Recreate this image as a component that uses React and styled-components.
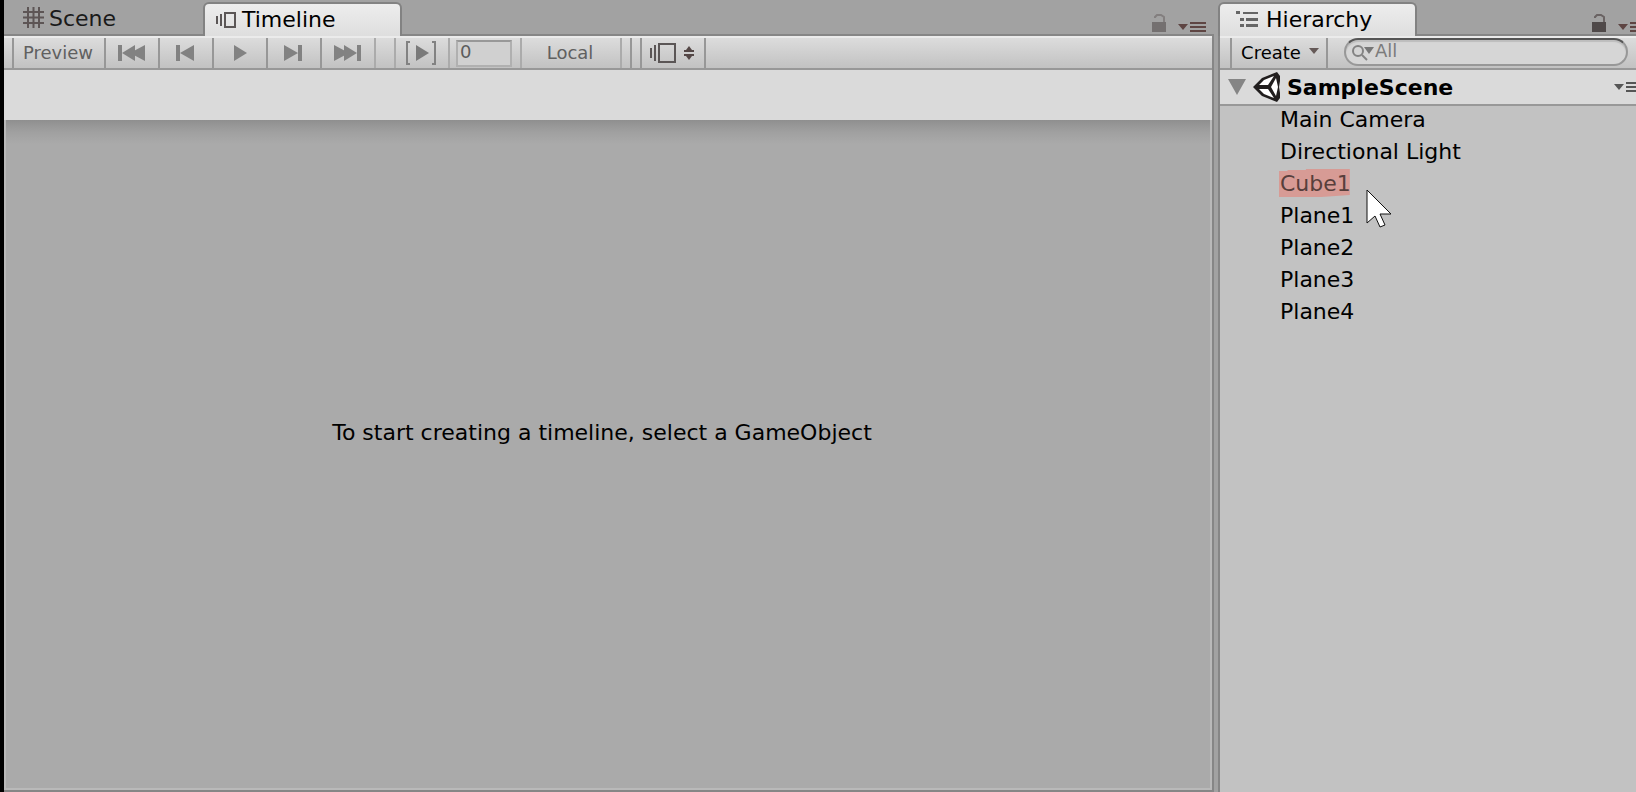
import React from "react";
import styled, { createGlobalStyle, css } from "styled-components";

const GlobalStyle = createGlobalStyle`
  * { box-sizing: border-box; }
  body {
    margin: 0;
    overflow: hidden;
    background: #a2a2a2;
    font-family: "DejaVu Sans", Verdana, sans-serif;
    font-size: 22px;
    color: #000;
  }
  button, input { font: inherit; color: inherit; margin: 0; padding: 0; border: 0; border-radius: 0; background: none; }
  svg { display: block; flex: none; }
`;

const Editor = styled.main`
  display: flex;
  height: 100vh;
  overflow: hidden;
  border-left: 4px solid #000;
`;

const Pane = styled.section`
  display: flex;
  flex-direction: column;
  min-width: 0;
  ${(p) => (p.$main
    ? css`flex: 1;`
    : css`flex: 0 0 418px; margin-left: 4px;`)}
`;

const PaneHeader = styled.header`
  display: flex;
  align-items: flex-end;
  height: 36px;
  flex: none;
  border-bottom: 2px solid #868686;
`;

const TabList = styled.div`
  display: flex;
  flex: 1;
  align-items: flex-end;
`;

const Tab = styled.button`
  display: flex;
  align-items: center;
  height: 34px;
  gap: 5px;
  padding: 4px 0 0 19px;
  line-height: 30px;
  color: #1a1a1a;
  width: ${(p) => p.$width}px;
  ${(p) => p.$active && css`
    margin-bottom: -2px;
    padding-top: 0;
    padding-left: ${p.$inset}px;
    gap: ${p.$gap}px;
    color: #000;
    background: linear-gradient(#ededed, #dedede);
    border: 2px solid #828282;
    border-bottom: 0;
    border-radius: 6px 6px 0 0;
  `}
`;

const HeaderTools = styled.div`
  display: flex;
  align-items: flex-end;
  gap: 12px;
  height: 34px;
  padding-bottom: 2px;
  margin-right: ${(p) => p.$edge}px;
`;

const IconButton = styled.button`
  display: flex;
  opacity: ${(p) => (p.$dim ? 0.55 : 1)};
`;

const PaneFrame = styled.div`
  display: flex;
  flex: 1;
  flex-direction: column;
  min-height: 0;
  ${(p) => (p.$main
    ? css`border-right: 2px solid #868686; border-bottom: 2px solid #868686;`
    : css`border-left: 2px solid #868686; background: #c2c2c2;`)}
`;

const Toolbar = styled.div`
  display: flex;
  flex: none;
  height: 34px;
  padding-left: ${(p) => p.$inset}px;
  border-top: 2px solid #ebebeb;
  border-bottom: 2px solid #989898;
  background: linear-gradient(#dcdcdc, #c2c2c2);
  font-size: 18px;
`;

const ToolButton = styled.button`
  display: flex;
  align-items: center;
  justify-content: center;
  gap: 8px;
  width: ${(p) => p.$width}px;
  height: 30px;
  padding-right: 2px;
  line-height: 30px;
  border-left: 2px solid ${(p) => (p.$faint ? "#ababab" : "#979797")};
  color: ${(p) => (p.$enabled ? "#000" : "#606060")};
`;

const CreateButton = styled(ToolButton)`
  padding: 0 0 0 2px;
`;

const Spacer = styled.span`
  width: ${(p) => p.$width}px;
  border-left: 2px solid ${(p) => (p.$faint ? "#ababab" : "#979797")};
`;

const FrameCell = styled.label`
  display: flex;
  align-items: flex-start;
  width: 72px;
  padding: 2px 8px 0 6px;
  border-left: 2px solid #ababab;
`;

const FrameInput = styled.input`
  width: 56px;
  height: 27px;
  padding: 0 0 4px 2px;
  line-height: 20px;
  color: #5c5c5c;
  background: #d0d0d0;
  border: 2px solid #b0b0b0;
  border-top-color: #989898;
  outline: 0;
`;

const TrackHeader = styled.div`
  flex: none;
  height: 50px;
  background: #dadada;
`;

const TimelineBody = styled.div`
  display: flex;
  flex: 1;
  align-items: center;
  justify-content: center;
  padding: 0 12px 42px 0;
  border: 2px solid #b9b9b9;
  border-top: 0;
  background: linear-gradient(#8f8f8f, #a0a0a0 12px, #aaaaaa 24px) #aaaaaa;
`;

const Message = styled.p`
  margin: 0;
  line-height: 28px;
`;

const SearchArea = styled.div`
  flex: 1;
  padding: 0 8px 0 16px;
  border-left: 2px solid #979797;
`;

const SearchField = styled.label`
  display: flex;
  align-items: center;
  height: 28px;
  padding-left: 6px;
  gap: 1px;
  background: #d6d6d6;
  border: 2px solid #989898;
  border-top-color: #555;
  border-radius: 14px;
  box-shadow: inset 0 2px 1px #bdbdbd;
`;

const SearchInput = styled.input`
  flex: 1;
  min-width: 0;
  height: 24px;
  padding-bottom: 3px;
  outline: 0;
  &::placeholder { color: #7c7c7c; opacity: 1; }
`;

const SceneRow = styled.div`
  display: flex;
  flex: none;
  align-items: center;
  height: 36px;
  padding-left: 8px;
  border-bottom: 2px solid #989898;
  background: #dadada;
`;

const SceneToggle = styled.button`
  display: flex;
  align-items: center;
  gap: 7px;
`;

const SceneName = styled.h1`
  flex: 1;
  margin: 0 0 0 6px;
  padding-top: 2px;
  font-size: 22px;
  line-height: 32px;
`;

const SceneMenu = styled(IconButton)`
  margin-right: -6px;
`;

const ObjectList = styled.ul`
  display: flex;
  flex-direction: column;
  align-items: flex-start;
  gap: 6px;
  margin: 0;
  padding: 1px 0 0 59px;
  list-style: none;
`;

const ObjectItem = styled.li`
  display: flex;
`;

const ObjectButton = styled.button`
  position: relative;
  z-index: 0;
  padding: 0 1px;
  line-height: 26px;
  ${(p) => p.$marked && css`
    padding-right: 0;
    color: #573f3c;
    &::before {
      content: "";
      position: absolute;
      z-index: -1;
      inset: -2px 1px 0 0;
      background: #d79b95;
      clip-path: polygon(0 2px, 12% 2px, 12% 1px, 38% 1px, 38% 0, 100% 0, 100% 26px, 60% 28px, 0 28px);
    }
  `}
`;

const Cursor = styled.svg`
  position: absolute;
  left: 87px;
  top: 18px;
  pointer-events: none;
`;

const GridIcon = () => (
  <svg width="21" height="25" viewBox="0 0 21 25" fill="none" stroke="#5d5555" strokeWidth="2">
    <path d="M5 0v21M10.500 0v21M16 0v21M0 5h21M0 10.500h21M0 16h21" />
  </svg>
);

const TimelineIcon = ({ large }) => (
  <svg width={large ? 26 : 20} height={large ? 22 : 18} viewBox={large ? "0 0 26 22" : "0 0 20 18"} fill="none" stroke="#5b5656" strokeWidth="2">
    {large
      ? <path d="M1 6v10M5 3v16M9 2h16v18H9z" />
      : <path d="M1 5v8M5 3v12M9 2h10v14H9z" />}
  </svg>
);

const HierarchyIcon = () => (
  <svg width="22" height="18" viewBox="0 0 22 18" fill="#666">
    <path d="M0 0h4v3H0zM7 1h15v2H7zM4 7h4v3H4zM10 7h12v3H10zM4 13h4v3H4zM10 13h12v3H10z" />
  </svg>
);

const LockIcon = () => (
  <svg width="14" height="18" viewBox="0 0 14 18">
    <path d="M0 8h14v10H0z" fill="#4f4949" />
    <path d="M3 4V3l2-2h4l3 2v5" fill="none" stroke="#6a6363" strokeWidth="2" />
  </svg>
);

const MenuIcon = ({ tone = "#5e4543" }) => (
  <svg width="28" height="10" viewBox="0 0 28 10" fill={tone}>
    <path d="M0 2h10L5 8zM12 0h16v2H12zM12 4h16v2H12zM12 8h16v2H12z" />
  </svg>
);

const transport = {
  first: <path d="M0 0h4v16H0zM4 8L17 0v16zM12 8L27 0v16z" />,
  previous: <path d="M4 0h4v16H4zM8 8L22 0v16z" />,
  play: <path d="M8 0L21 8 8 16z" />,
  next: <path d="M4 0l14 8L4 16zM18 0h4v16h-4z" />,
  last: <path d="M0 0l15 8-15 8zM10 0l13 8-13 8zM23 0h4v16h-4z" />,
};

const TransportIcon = ({ name }) => (
  <svg width="27" height="16" viewBox="0 0 27 16" fill="#828282">{transport[name]}</svg>
);

const PlayRangeIcon = () => (
  <svg width="30" height="24" viewBox="0 0 30 24">
    <path d="M4 1H1v22h3M26 1h3v22h-3" fill="none" stroke="#828282" strokeWidth="2" />
    <path d="M10 4l13 8-13 8z" fill="#7a7a7a" />
  </svg>
);

const UpDownIcon = () => (
  <svg width="10" height="14" viewBox="0 0 10 14" fill="#544746">
    <path d="M5 0l3 4h2v2H0V4h2zM0 8h10v2H8l-3 4-3-4H0z" />
  </svg>
);

const CaretIcon = () => (
  <svg width="10" height="14" viewBox="0 0 10 14" fill="#655957"><path d="M0 2h10L5 8z" /></svg>
);

const SearchIcon = () => (
  <svg width="22" height="18" viewBox="0 0 22 18">
    <g fill="none" stroke="#838383" strokeWidth="2"><circle cx="6" cy="8" r="5" /><path d="M10 12l5 5" /></g>
    <path d="M12 4h10l-5 7z" fill="#777" />
  </svg>
);

const FoldIcon = () => (
  <svg width="18" height="16" viewBox="0 0 18 16" fill="#858585"><path d="M0 0h18L9 16z" /></svg>
);

const UnityIcon = () => (
  <svg width="28" height="30" viewBox="0 0 28 30">
    <path d="M0 15L9 6 24 0 27 4 27 9 26 15 27 21 27 26 24 30 9 24z" fill="#211e1e" />
    <path d="M6 13L11 8 21 4 15 13zM6 17h9l6 9-10-4zM18 15l5-9 2 9-2 9z" fill="#fff" />
  </svg>
);

const CursorIcon = () => (
  <Cursor width="26" height="39" viewBox="0 0 26 39" aria-hidden="true">
    <path d="M1 1v33l8-7 5 11 5-2-5-11h11z" fill="#fff" stroke="#111" strokeWidth="1" />
  </Cursor>
);

const transportButtons = [
  ["first", "Go to start"],
  ["previous", "Previous frame"],
  ["play", "Play"],
  ["next", "Next frame"],
  ["last", "Go to end"],
];

const sceneObjects = ["Main Camera", "Directional Light", "Cube1", "Plane1", "Plane2", "Plane3", "Plane4"];

function TimelinePane() {
  return (
    <Pane $main>
      <PaneHeader>
        <TabList role="tablist">
          <Tab role="tab" aria-selected="false" $width={199}><GridIcon />Scene</Tab>
          <Tab role="tab" aria-selected="true" $active $width={199} $inset={11} $gap={6}><TimelineIcon />Timeline</Tab>
        </TabList>
        <HeaderTools $edge={8}>
          <IconButton $dim aria-label="Lock"><LockIcon /></IconButton>
          <IconButton aria-label="Timeline menu"><MenuIcon /></IconButton>
        </HeaderTools>
      </PaneHeader>
      <PaneFrame $main>
        <Toolbar $inset={8}>
          <ToolButton $width={92}>Preview</ToolButton>
          {transportButtons.map(([name, label]) => (
            <ToolButton key={name} $width={54} aria-label={label}><TransportIcon name={name} /></ToolButton>
          ))}
          <Spacer $faint $width={20} />
          <ToolButton $faint $width={54} aria-label="Play range"><PlayRangeIcon /></ToolButton>
          <FrameCell><FrameInput aria-label="Frame" defaultValue="0" /></FrameCell>
          <ToolButton $faint $width={100}>Local</ToolButton>
          <Spacer $faint $width={10} />
          <Spacer $width={10} />
          <ToolButton $width={64} aria-label="Edit mode"><TimelineIcon large /><UpDownIcon /></ToolButton>
          <Spacer $width={2} />
        </Toolbar>
        <TrackHeader />
        <TimelineBody>
          <Message>To start creating a timeline, select a GameObject</Message>
        </TimelineBody>
      </PaneFrame>
    </Pane>
  );
}

function HierarchyPane() {
  return (
    <Pane>
      <PaneHeader>
        <TabList role="tablist">
          <Tab role="tab" aria-selected="true" $active $width={199} $inset={16} $gap={8}><HierarchyIcon />Hierarchy</Tab>
        </TabList>
        <HeaderTools $edge={-10}>
          <IconButton aria-label="Lock"><LockIcon /></IconButton>
          <IconButton aria-label="Hierarchy menu"><MenuIcon /></IconButton>
        </HeaderTools>
      </PaneHeader>
      <PaneFrame>
        <Toolbar $inset={10}>
          <CreateButton $enabled $width={96}>Create<CaretIcon /></CreateButton>
          <SearchArea>
            <SearchField>
              <SearchIcon />
              <SearchInput type="text" placeholder="All" aria-label="Search hierarchy" />
            </SearchField>
          </SearchArea>
        </Toolbar>
        <SceneRow>
          <SceneToggle aria-label="Collapse scene"><FoldIcon /><UnityIcon /></SceneToggle>
          <SceneName>SampleScene</SceneName>
          <SceneMenu aria-label="Scene menu"><MenuIcon tone="#555" /></SceneMenu>
        </SceneRow>
        <ObjectList>
          {sceneObjects.map((name) => (
            <ObjectItem key={name}>
              <ObjectButton $marked={name === "Cube1"}>
                {name}
                {name === "Cube1" && <CursorIcon />}
              </ObjectButton>
            </ObjectItem>
          ))}
        </ObjectList>
      </PaneFrame>
    </Pane>
  );
}

export default function App() {
  return (
    <>
      <GlobalStyle />
      <Editor>
        <TimelinePane />
        <HierarchyPane />
      </Editor>
    </>
  );
}
